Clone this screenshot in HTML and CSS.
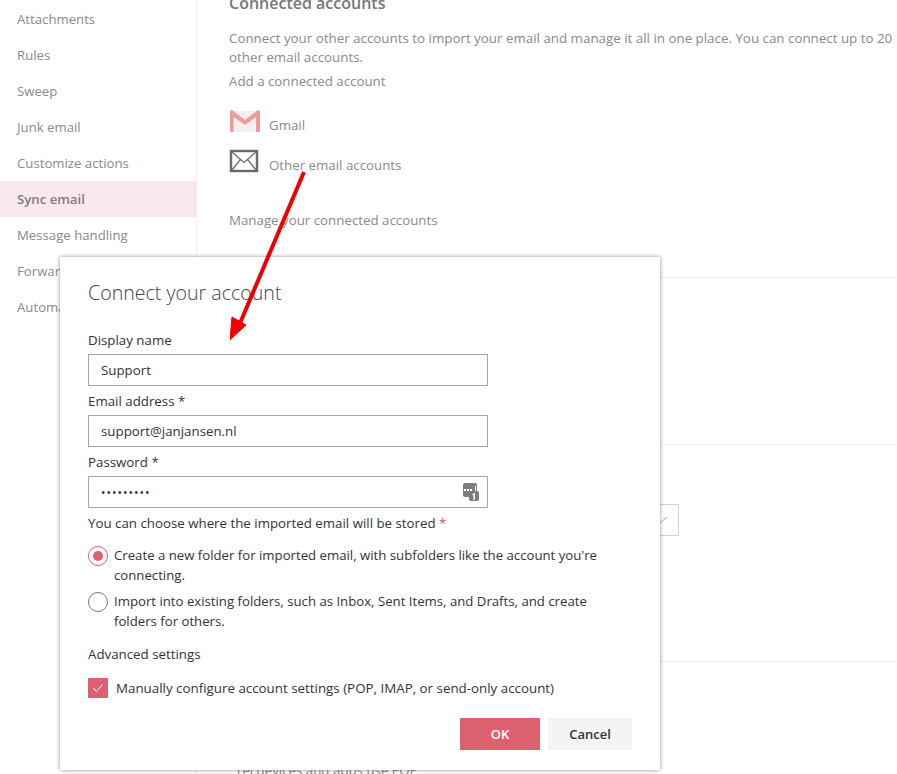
FILE: index.html
```html
<!DOCTYPE html>
<html lang="en">
<head>
<meta charset="utf-8">
<title>Connect your account</title>
<link rel="stylesheet" href="styles.css">
</head>
<body>
<div class="page">
  <nav class="sidebar">
    <div class="nav-item">Attachments</div>
    <div class="nav-item">Rules</div>
    <div class="nav-item">Sweep</div>
    <div class="nav-item">Junk email</div>
    <div class="nav-item">Customize actions</div>
    <div class="nav-item active">Sync email</div>
    <div class="nav-item">Message handling</div>
    <div class="nav-item">Forwarding</div>
    <div class="nav-item">Automatic replies</div>
  </nav>
  <main class="content">
    <h2 class="heading">Connected accounts</h2>
    <p class="intro">Connect your other accounts to import your email and manage it all in one place. You can connect up to 20 other email accounts.</p>
    <p class="add">Add a connected account</p>
    <div class="provider gmail-row">
      <svg class="provider-icon" width="32" height="24" viewBox="0 0 32 24">
        <path d="M1 2 H31 V23 H1 Z" fill="#f3f1f0"/>
        <path d="M1 2 L3 1 L16 11 L29 1 L31 2 V22.500 L30 23 H27 V8 L16 16 L4.500 8 V23 H2 L1 22.500 Z" fill="#f09b96"/>
      </svg>
      <span class="provider-name">Gmail</span>
    </div>
    <div class="provider other-row">
      <svg class="provider-icon" width="32" height="24" viewBox="0 0 32 24">
        <rect x="2" y="2" width="26" height="20" fill="#fff" stroke="#6a6a6a" stroke-width="2.400"/>
        <path d="M3 3 L15 13.500 L27 3 M3 21 L11.500 10.500 M27 21 L18.500 10.500" fill="none" stroke="#6a6a6a" stroke-width="1.200"/>
      </svg>
      <span class="provider-name">Other email accounts</span>
    </div>
    <p class="manage">Manage your connected accounts</p>
    <hr class="rule rule-one">
    <hr class="rule rule-two">
    <div class="select-stub"><svg width="12" height="8" viewBox="0 0 12 8"><path d="M5 7 L12 1" stroke="#aaa" fill="none"/></svg></div>
    <hr class="rule rule-three">
    <p class="hidden-line">Tel devices and apps use EOP</p>
  </main>
</div>

<section class="dialog">
  <h1 class="dialog-title">Connect your account</h1>
  <label class="label">Display name</label>
  <div class="field">Support</div>
  <label class="label">Email address <span class="star-plain">*</span></label>
  <div class="field">support@janjansen.nl</div>
  <label class="label">Password <span class="star-plain">*</span></label>
  <div class="field password">
    <span class="dots">•••••••••</span>
    <svg class="key-icon" width="16" height="18" viewBox="0 0 16 18">
      <rect x="0" y="0" width="14" height="14" rx="2" fill="#7d7d7d"/>
      <rect x="1" y="6" width="2" height="2" fill="#fff"/>
      <rect x="4" y="6" width="2" height="2" fill="#fff"/>
      <rect x="7" y="6" width="2" height="2" fill="#fff"/>
      <rect x="12" y="3" width="1" height="6" fill="#fff"/>
      <rect x="6" y="8" width="10" height="10" rx="2" fill="#7d7d7d"/>
      <path d="M9.500 11 L12 9.800 V17 H10.500 V12 L9.500 12.500 Z" fill="#fff"/>
    </svg>
  </div>
  <p class="store">You can choose where the imported email will be stored <span class="star">*</span></p>
  <div class="radio-row first">
    <span class="radio checked"></span>
    <span>Create a new folder for imported email, with subfolders like the account you're connecting.</span>
  </div>
  <div class="radio-row second">
    <span class="radio"></span>
    <span>Import into existing folders, such as Inbox, Sent Items, and Drafts, and create folders for others.</span>
  </div>
  <p class="advanced">Advanced settings</p>
  <div class="check-row">
    <span class="check"><svg width="12" height="10" viewBox="0 0 12 10"><path d="M1.500 5 L4.500 8.500 L10.500 1.500" fill="none" stroke="#fff" stroke-width="1"/></svg></span>
    <span>Manually configure account settings (POP, IMAP, or send-only account)</span>
  </div>
  <div class="actions">
    <button class="btn primary">OK</button>
    <button class="btn">Cancel</button>
  </div>
</section>

<svg class="arrow" width="100" height="180" viewBox="0 0 100 180">
  <path d="M74 2 L8 158" stroke="#f00000" stroke-width="4" fill="none"/>
  <path d="M0 170 L2 147 L16 155 Z" fill="#f00000" stroke="#f00000" stroke-width="1"/>
</svg>
</body>
</html>
```
FILE: styles.css
```css
* { box-sizing: border-box; }
html, body { margin: 0; height: 100%; }
body {
  width: 897px;
  height: 774px;
  overflow: hidden;
  position: relative;
  background: #fff;
  font-family: "Open Sans", "Liberation Sans", sans-serif;
  font-size: 13.3px;
  color: #333;
}
.page { display: flex; height: 774px; overflow: hidden; color: #8a8a8a; }
.sidebar { width: 197px; flex: none; padding-top: 1px; border-right: 1px solid #f1f1f1; }
.nav-item { height: 36px; line-height: 36px; padding-left: 17px; white-space: nowrap; font-size: 13.2px; }
.nav-item.active { background: #f9e9ec; font-weight: 600; color: #7e7e7e; }
.content { flex: 1; padding-left: 32px; min-width: 0; display: flex; flex-direction: column; }
.heading { margin: -7px 0 0; font-size: 16px; line-height: 21px; font-weight: 600; color: #777; }
.intro { margin: 15px 0 0; line-height: 19px; width: 668px; font-size: 13.35px; }
.add { margin: 5px 0 0; line-height: 19px; }
.provider { display: flex; align-items: flex-end; gap: 8px; height: 24px; flex: none; }
.provider-name { line-height: 19px; margin-bottom: -2px; }
.provider-icon { flex: none; }
.gmail-row { margin-top: 18px; }
.other-row { margin-top: 16px; }
.manage { margin: 38px 0 0; line-height: 19px; }
.rule { border: 0; height: 1px; background: #f1f1f1; margin: 0 1px 0 -32px; flex: none; }
.rule-one { margin-top: 47px; }
.rule-two { margin-top: 166px; }
.select-stub {
  align-self: flex-start;
  margin: 59px 0 0 400px;
  width: 50px;
  height: 32px;
  flex: none;
  border: 1px solid #d2d2d2;
  display: flex;
  align-items: center;
  justify-content: flex-end;
  padding-right: 11px;
}
.rule-three { margin-top: 125px; }
.hidden-line { margin: 99px 0 0 6px; line-height: 19px; white-space: nowrap; }

.dialog {
  position: absolute;
  left: 60px;
  top: 257px;
  width: 600px;
  height: 513px;
  background: #fff;
  padding: 22px 28px 0;
  box-shadow: 0 0 4px rgba(0, 0, 0, .45);
  display: flex;
  flex-direction: column;
  color: #333;
}
.dialog-title { margin: 0; font-size: 19.600px; line-height: 28px; font-weight: 300; color: #444; }
.label { display: block; line-height: 19px; }
.dialog-title + .label { margin-top: 24px; }
.field {
  width: 400px;
  height: 32px;
  flex: none;
  border: 1px solid #a6a6a6;
  line-height: 30px;
  padding-left: 12px;
  margin-top: 4px;
  position: relative;
}
.field + .label { margin-top: 6px; }
.dots { letter-spacing: 1px; font-size: 12px; }
.key-icon { position: absolute; right: 8px; top: 6px; }
.star { color: #d9534f; }
.store { margin: 6px 0 0; line-height: 19px; }
.radio-row { display: flex; gap: 6px; line-height: 19.500px; width: 530px; font-size: 13.2px; }
.radio-row.first { margin-top: 13px; }
.radio-row.second { margin-top: 7px; }
.radio {
  flex: none;
  width: 20px;
  height: 20px;
  border: 1px solid #777;
  border-radius: 50%;
  background: #fff;
  display: flex;
  align-items: center;
  justify-content: center;
}
.radio.checked { border-color: #dd606e; }
.radio.checked::after { content: ""; width: 10px; height: 10px; border-radius: 50%; background: #dd606e; }
.advanced { margin: 14px 0 0; line-height: 19px; }
.check-row { display: flex; align-items: center; gap: 8px; margin-top: 14px; line-height: 19px; font-size: 13.35px; }
.check { width: 20px; height: 20px; background: #dd606e; display: flex; align-items: center; justify-content: center; flex: none; }
.actions { display: flex; justify-content: flex-end; gap: 8px; margin-top: 20px; }
.btn {
  height: 32px;
  width: 84px;
  border: 0;
  background: #f4f4f4;
  color: #333;
  font: 600 13px "Open Sans", "Liberation Sans", sans-serif;
  padding: 0;
}
.btn.primary { width: 80px; background: #dd606e; color: #fff; }
.arrow { position: absolute; left: 230px; top: 170px; }
```
